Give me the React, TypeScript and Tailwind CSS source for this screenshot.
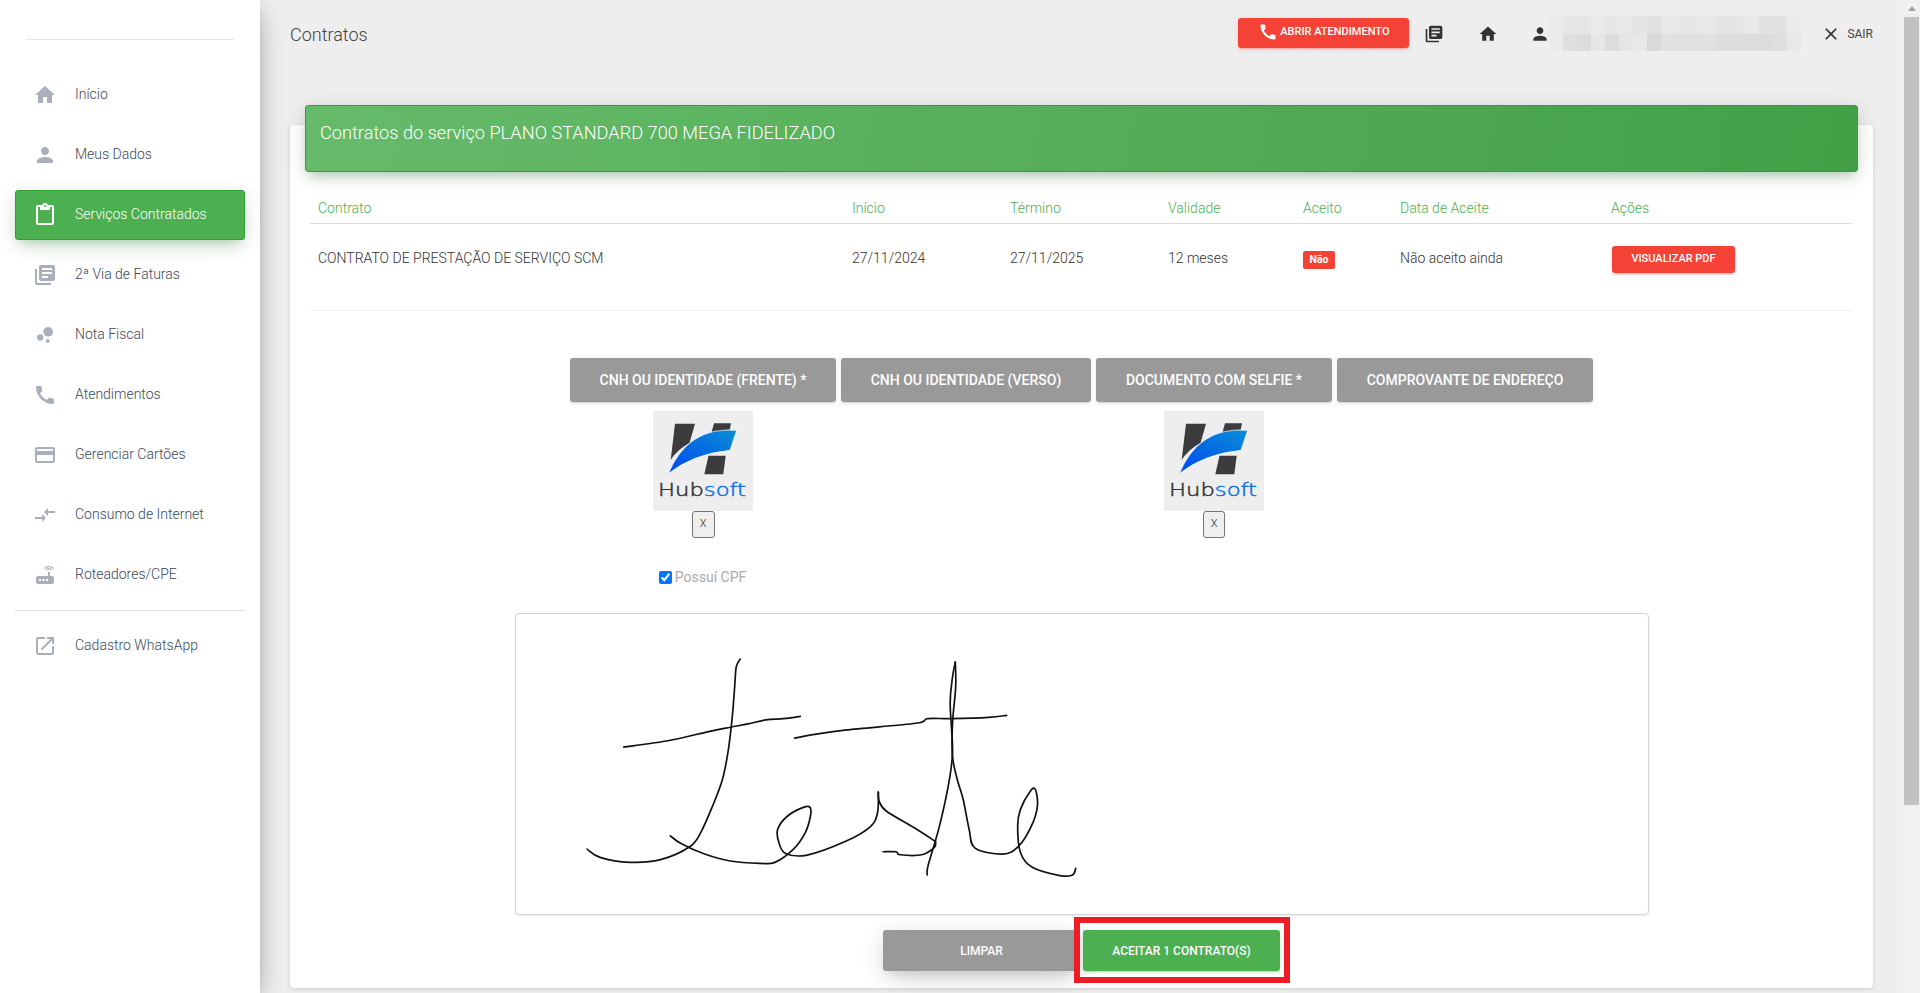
import { ReactNode } from "react";
import {
  MdBubbleChart,
  MdCall,
  MdClose,
  MdCompareArrows,
  MdContentPaste,
  MdCreditCard,
  MdHome,
  MdLibraryBooks,
  MdOpenInNew,
  MdPerson,
  MdRouter,
} from "react-icons/md";

const navItems = [
  { label: "Início", icon: <MdHome size={24} /> },
  { label: "Meus Dados", icon: <MdPerson size={24} /> },
  { label: "Serviços Contratados", icon: <MdContentPaste size={24} />, active: true },
  { label: "2ª Via de Faturas", icon: <MdLibraryBooks size={24} /> },
  { label: "Nota Fiscal", icon: <MdBubbleChart size={24} /> },
  { label: "Atendimentos", icon: <MdCall size={24} /> },
  { label: "Gerenciar Cartões", icon: <MdCreditCard size={24} /> },
  { label: "Consumo de Internet", icon: <MdCompareArrows size={24} /> },
  { label: "Roteadores/CPE", icon: <MdRouter size={24} /> },
];

// Blurred customer name in the header
const blurRows = [
  ["#ebebeb", "#e6e6e6", "#e5e5e5", "#eaeaea", "#e6e6e6", "#e8e8e8", "#e4e4e4", "#e1e1e1", "#e8e8e8", "#e7e7e7", "#e7e7e7", "#e8e8e8", "#e3e3e3", "#e5e5e5", "#e8e8e8", "#e2e2e2", "#e2e2e2", "#eaeaea"],
  ["#ebebeb", "#dfdfdf", "#dbdbdb", "#e7e7e7", "#dcdcdc", "#e5e5e5", "#e8e8e8", "#d9d9d9", "#e1e1e1", "#e0e0e0", "#e0e0e0", "#e1e1e1", "#dddddd", "#dddddd", "#dddddd", "#dcdcdc", "#dfdfdf", "#e8e8e8"],
];

const columns = "grid grid-cols-[534px_158px_158px_135px_97px_211px_1fr]";

const strokes: number[][][] = [
  [[285,412],[400,392],[500,365],[555,352],[600,342],[645,330],[690,326],[732,319]],
  [[718,385],[760,375],[850,360],[1025,340],[1055,326],[1115,326],[1210,322],[1255,316]],
  [[580,146],[570,170],[566,230],[560,320],[550,420],[535,510],[510,590],[480,670],[452,713],[378,752],[300,760],[225,745],[192,720]],
  [[403,680],[430,703],[490,735],[555,756],[630,763],[668,760],[715,720],[745,670],[758,620],[757,594],[740,594],[700,620],[675,660],[678,700],[695,733],[750,738],[850,695],[910,652],[928,610],[930,548]],
  [[930,548],[932,575],[950,605],[1020,655],[1075,697]],
  [[1075,697],[1072,715],[1040,737],[985,737],[975,728],[942,728]],
  [[1054,798],[1056,770],[1085,650],[1110,510],[1118,420],[1112,280],[1118,200],[1125,155]],
  [[1125,155],[1126,230],[1118,340],[1118,440],[1130,510],[1145,570],[1160,660],[1175,717],[1245,735],[1285,712],[1318,650],[1333,590],[1328,540],[1315,545],[1290,600],[1283,650],[1290,730],[1320,775],[1390,800],[1422,798],[1430,778]],
];

function toPath(points: number[][]) {
  let d = `M${points[0][0]} ${points[0][1]}`;
  for (let i = 0; i < points.length - 1; i++) {
    const p0 = points[Math.max(i - 1, 0)];
    const p1 = points[i];
    const p2 = points[i + 1];
    const p3 = points[Math.min(i + 2, points.length - 1)];
    const c1x = p1[0] + (p2[0] - p0[0]) / 6;
    const c1y = p1[1] + (p2[1] - p0[1]) / 6;
    const c2x = p2[0] - (p3[0] - p1[0]) / 6;
    const c2y = p2[1] - (p3[1] - p1[1]) / 6;
    d += `C${c1x} ${c1y} ${c2x} ${c2y} ${p2[0]} ${p2[1]}`;
  }
  return d;
}

function HubsoftLogo({ id }: { id: string }) {
  return (
    <svg viewBox="0 0 100 100" className="block h-[100px] w-[100px] bg-[#eeeeee]">
      <defs>
        <linearGradient id={id} x1="0" y1="1" x2="1" y2="0">
          <stop offset="0" stopColor="#0048f0" />
          <stop offset="1" stopColor="#0a8ed6" />
        </linearGradient>
      </defs>
      <path d="M22 12.7H42L36.5 32Q25 38 17.7 48.7Z" fill="#3c3c3e" />
      <path d="M61 12.2H78L76.8 18.5Q66 20 57.8 24Z" fill="#3c3c3e" />
      <path d="M55.5 44.8H72.7L70.3 63.3H51.3Z" fill="#3c3c3e" />
      <path d="M83.7 19.3Q35 15 15.3 62.7Q40 43 77 39.3Z" fill={`url(#${id})`} stroke="#ffffff" strokeWidth="0.7" />
      <text
        x="5"
        y="85"
        fontSize="17"
        fontFamily="'DejaVu Sans', sans-serif"
        strokeWidth="0.45"
        textLength="88"
        lengthAdjust="spacingAndGlyphs"
      >
        <tspan fill="#333333" stroke="#333333">Hub</tspan>
        <tspan fill="#0a6fe6" stroke="#0a6fe6">soft</tspan>
      </text>
    </svg>
  );
}

function RemoveButton({ width }: { width: string }) {
  return (
    <button className={`block h-[27px] rounded-[3px] border border-[#767676] bg-[#efefef] text-[11px] text-[#222] ${width}`}>
      X
    </button>
  );
}

function UploadColumn({ label, width, children }: { label: string; width: string; children?: ReactNode }) {
  return (
    <div className={`flex flex-col items-center ${width}`}>
      <button className="h-[44px] w-full rounded-[3px] bg-[#999999] text-[14px] font-medium uppercase text-white shadow-[0_2px_2px_0_rgba(153,153,153,.14),0_3px_1px_-2px_rgba(153,153,153,.2),0_1px_5px_0_rgba(153,153,153,.12)]">
        {label}
      </button>
      {children}
    </div>
  );
}

export default function App() {
  return (
    <div className="flex h-[993px] w-[1920px] overflow-hidden bg-[#eeeeee] text-[14px] font-light text-[#333] [font-family:Roboto,sans-serif]">
      <aside className="z-10 flex w-[260px] shrink-0 flex-col bg-white shadow-[0_10px_30px_-12px_rgba(0,0,0,.42),0_4px_25px_0_rgba(0,0,0,.12),0_8px_10px_-5px_rgba(0,0,0,.2)]">
        <div className="mx-[26px] mt-[39px] h-px bg-[#e5e5e5]" />
        <nav className="mt-[30px] px-[15px]">
          {navItems.map((item) => (
            <a
              key={item.label}
              className={
                item.active
                  ? "mb-[10px] flex h-[50px] items-center rounded-[3px] border border-[#2fa033] bg-[#4caf50] pl-[17px] text-white shadow-[0_12px_20px_-10px_rgba(76,175,80,.28),0_4px_20px_0_rgba(0,0,0,.12),0_7px_8px_-5px_rgba(76,175,80,.2)]"
                  : "mb-[10px] flex h-[50px] items-center pl-[18px] text-[#3c4858]"
              }
            >
              <span className={item.active ? "text-white" : "text-[#a9afbb]"}>{item.icon}</span>
              <span className="-mt-[2px] ml-[18px]">{item.label}</span>
            </a>
          ))}
          <div className="h-px bg-[#dddddd]" />
          <a className="mt-[10px] flex h-[50px] items-center pl-[18px] text-[#3c4858]">
            <span className="text-[#a9afbb]">
              <MdOpenInNew size={24} />
            </span>
            <span className="-mt-px ml-[18px]">Cadastro WhatsApp</span>
          </a>
        </nav>
      </aside>

      <main className="flex min-w-0 flex-1 flex-col px-[30px]">
        <header className="flex h-[68px] shrink-0 items-start justify-between">
          <h1 className="mt-[23px] text-[18px] font-light leading-[24px] text-[#444]">Contratos</h1>
          <div className="mt-[16px] flex h-[35px] items-center text-[#333]">
            <button className="-mt-px flex h-[30px] w-[171px] items-center justify-center rounded-[3px] bg-[#f44336] pb-[2px] text-[11px] font-medium uppercase text-white shadow-[0_2px_2px_0_rgba(244,67,54,.14),0_3px_1px_-2px_rgba(244,67,54,.2),0_1px_5px_0_rgba(244,67,54,.12)]">
              <MdCall size={20} className="mr-[2px]" />
              Abrir atendimento
            </button>
            <MdLibraryBooks size={20} className="ml-[15px] mt-px" />
            <MdHome size={20} className="ml-[34px] mt-px" />
            <MdPerson size={20} className="ml-[32px] mt-px" />
            <div className="-ml-px flex h-[35px] w-[252px] flex-col">
              {blurRows.map((row, r) => (
                <div key={r} className="flex flex-1">
                  {row.map((color, c) => (
                    <div key={c} className="flex-1" style={{ backgroundColor: color }} />
                  ))}
                </div>
              ))}
            </div>
            <MdClose size={20} className="ml-[20px] mt-px" />
            <span className="ml-[6px] text-[12px] font-normal uppercase text-[#444]">Sair</span>
          </div>
        </header>

        <section className="mt-[57px] h-[863px] shrink-0 rounded-[4px] bg-white shadow-[0_1px_4px_0_rgba(0,0,0,.14)]">
          <div className="mx-[15px] -mt-[20px] h-[67px] rounded-[3px] border border-[#2fa033] bg-linear-[100deg,#66bb6a,#43a047] px-[14px] pt-[15px] text-[18.2px] font-light leading-[24px] text-white shadow-[0_4px_20px_0_rgba(0,0,0,.14),0_7px_10px_-5px_rgba(76,175,80,.4)]">
            Contratos do serviço PLANO STANDARD 700 MEGA FIDELIZADO
          </div>

          <div className="mx-[20px] mt-[22px]">
            <div className={`${columns} h-[30px] items-start border-b border-[#dddddd] text-[#4caf50]`}>
              {["Contrato", "Início", "Término", "Validade", "Aceito", "Data de Aceite", "Ações"].map((title) => (
                <div key={title} className="-mt-px px-[8px] leading-[30px]">
                  {title}
                </div>
              ))}
            </div>
            <div className={`${columns} h-[87px] items-center border-b border-[#eeeeee] pb-[16px]`}>
              <div className="-mt-[2px] px-[8px]">CONTRATO DE PRESTAÇÃO DE SERVIÇO SCM</div>
              <div className="-mt-[2px] px-[8px]">27/11/2024</div>
              <div className="-mt-[2px] px-[8px]">27/11/2025</div>
              <div className="-mt-[2px] px-[8px]">12 meses</div>
              <div className="mt-px px-[8px]">
                <span className="block h-[18px] w-[32px] rounded-[2px] bg-[#f44336] text-center text-[10.5px] font-bold leading-[18px] text-white">
                  Não
                </span>
              </div>
              <div className="-mt-[2px] px-[8px]">Não aceito ainda</div>
              <div className="px-[9px]">
                <button className="h-[27px] w-[123px] rounded-[3px] bg-[#f44336] text-[11px] font-medium uppercase text-white shadow-[0_2px_2px_0_rgba(244,67,54,.14),0_3px_1px_-2px_rgba(244,67,54,.2),0_1px_5px_0_rgba(244,67,54,.12)]">
                  Visualizar PDF
                </button>
              </div>
            </div>
          </div>

          <div className="mt-[47px] flex justify-center gap-[5px]">
            <UploadColumn label="CNH ou identidade (frente) *" width="w-[266px]">
              <div className="mt-[9px]">
                <HubsoftLogo id="logo-a" />
              </div>
              <RemoveButton width="w-[23px]" />
              <label className="mt-[29px] flex h-[20px] items-center gap-[3px] pr-[1px] text-[14px] font-normal text-[#aaaaaa]">
                <input type="checkbox" defaultChecked readOnly className="m-0 h-[13px] w-[13px] accent-[#0075ff]" />
                Possuí CPF
              </label>
            </UploadColumn>
            <UploadColumn label="CNH ou identidade (verso)" width="w-[250px]" />
            <UploadColumn label="Documento com selfie *" width="w-[236px]">
              <div className="mt-[9px]">
                <HubsoftLogo id="logo-b" />
              </div>
              <RemoveButton width="w-[22px]" />
            </UploadColumn>
            <UploadColumn label="Comprovante de endereço" width="w-[256px]" />
          </div>

          <div className="mx-auto mt-[26px] h-[302px] w-[1134px] overflow-hidden rounded-[4px] border border-[#d5d5d5] bg-white shadow-[0_1px_2px_rgba(0,0,0,.08)]">
            <svg viewBox="12 10 2868 906" preserveAspectRatio="none" className="block h-full w-full">
              {strokes.map((points) => (
                <path
                  key={points.join()}
                  d={toPath(points)}
                  fill="none"
                  stroke="#111111"
                  strokeWidth="1.7"
                  strokeLinejoin="round"
                  strokeLinecap="round"
                  vectorEffect="non-scaling-stroke"
                />
              ))}
            </svg>
          </div>

          <div className="mt-[15px] flex justify-center gap-[3px]">
            <button className="h-[41px] w-[197px] rounded-[3px] bg-[#999999] text-[12px] font-medium uppercase text-white shadow-[0_14px_26px_-12px_rgba(153,153,153,.42),0_4px_23px_0_rgba(0,0,0,.12),0_8px_10px_-5px_rgba(153,153,153,.2)]">
              Limpar
            </button>
            <div className="relative">
              <button className="h-[41px] w-[197px] rounded-[3px] bg-[#4caf50] text-[12px] font-medium uppercase text-white shadow-[0_2px_2px_0_rgba(76,175,80,.14),0_3px_1px_-2px_rgba(76,175,80,.2),0_1px_5px_0_rgba(76,175,80,.12)]">
                Aceitar 1 contrato(s)
              </button>
              {/* Red annotation drawn over the screenshot */}
              <span className="pointer-events-none absolute -bottom-[12px] -left-[9px] -right-[10px] -top-[13px] border-[6px] border-[#ee1c25]" />
            </div>
          </div>
        </section>
      </main>

      {/* Browser scrollbar */}
      <div className="flex w-[17px] shrink-0 flex-col items-center bg-[#f1f1f1]">
        <div className="flex h-[17px] w-full items-center justify-center">
          <span className="h-0 w-0 border-x-[4px] border-b-[5px] border-x-transparent border-b-[#a3a3a3]" />
        </div>
        <div className="h-[788px] w-[15px] bg-[#c1c1c1]" />
      </div>
    </div>
  );
}
